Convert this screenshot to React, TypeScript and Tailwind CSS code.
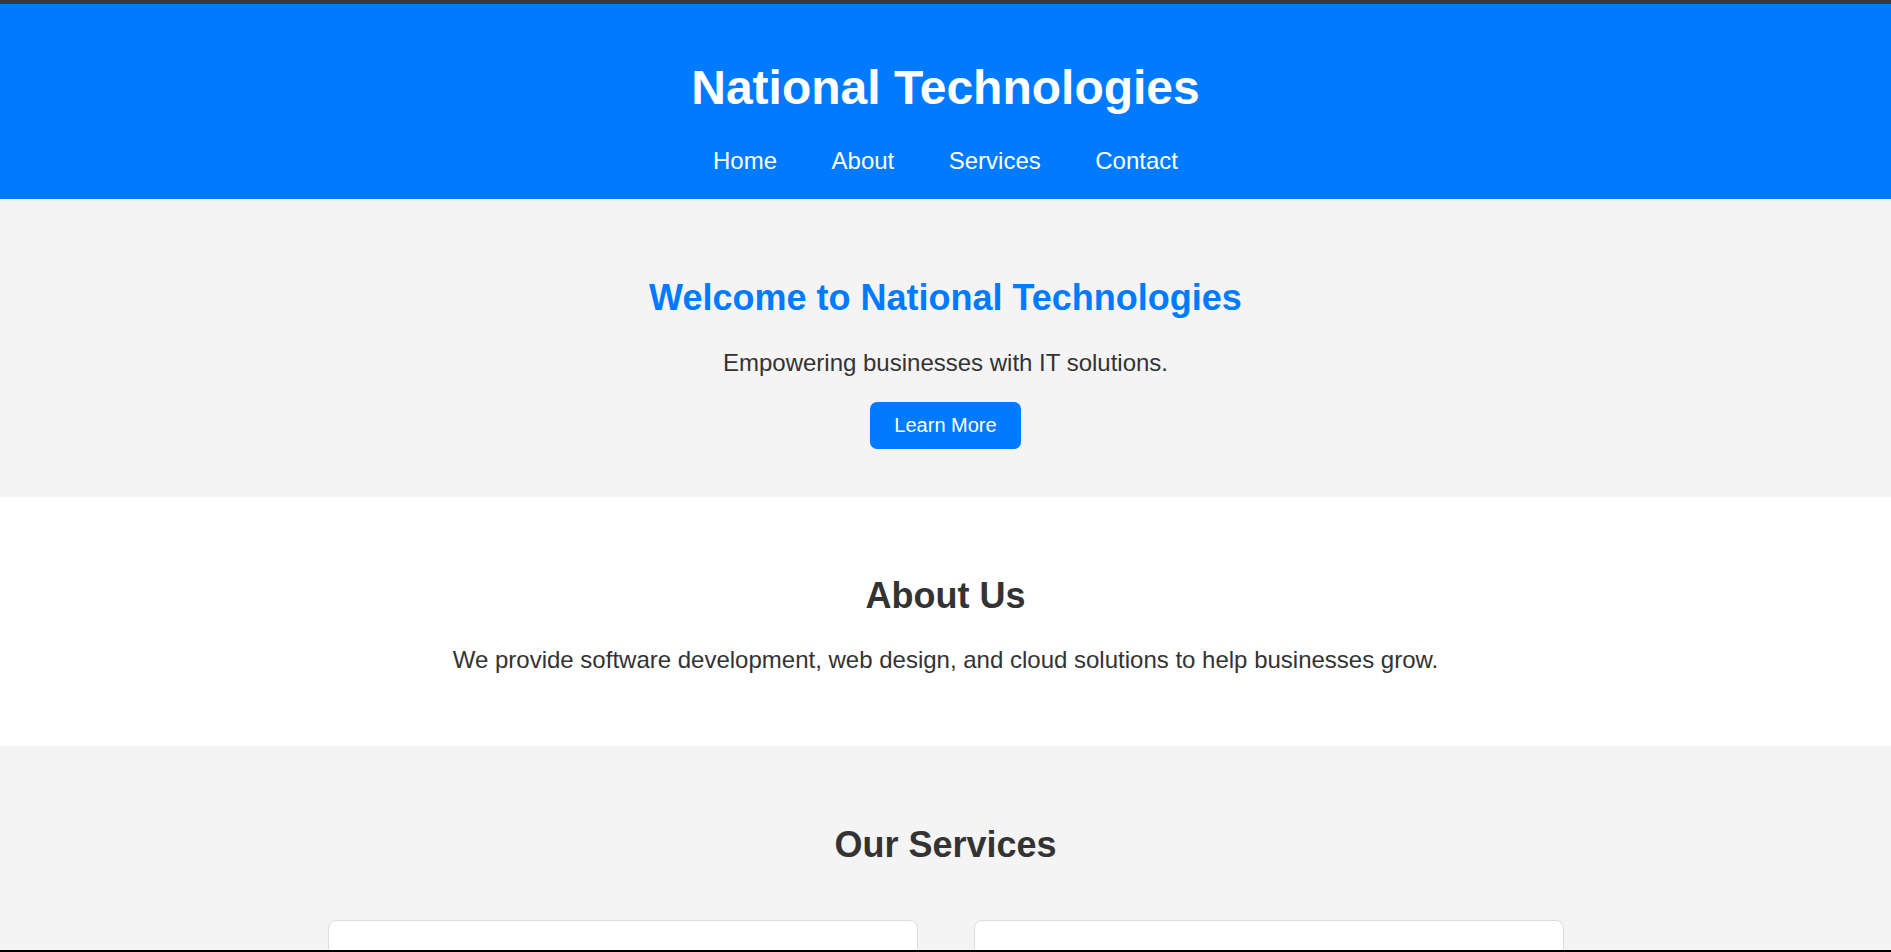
export default function App() {
  const links = ['Home', 'About', 'Services', 'Contact'];

  return (
    <div className="h-[952px] overflow-hidden flex flex-col bg-[#f4f4f4] text-[#333] font-['Liberation_Sans',Arial,sans-serif] border-t-4 border-t-[#3a3a3a] border-b-2 border-b-black">
      <header className="bg-[#007bff] text-white text-center py-6">
        <h1 className="text-[48px] leading-[55px] font-bold my-8">National Technologies</h1>
        <nav className="flex justify-center gap-[54.5px] text-[24px] leading-[28px]">
          {links.map((l) => (
            <a key={l} href="#" className="text-white">{l}</a>
          ))}
        </nav>
      </header>

      <section className="bg-[#f4f4f4] text-center pt-12 pb-[48px] flex flex-col items-center">
        <h2 className="text-[36px] leading-[41px] font-bold text-[#007bff] mt-[30px] mb-[31px]">Welcome to National Technologies</h2>
        <p className="text-[24px] leading-[28px] mb-[25px]">Empowering businesses with IT solutions.</p>
        <a href="#" className="bg-[#007bff] text-white text-[20px] leading-[23px] w-[151px] py-[12px] rounded-[7px]">Learn More</a>
      </section>

      <section className="bg-white text-center py-12">
        <h2 className="text-[36px] leading-[41px] font-bold mt-[30px] mb-[30px]">About Us</h2>
        <p className="text-[24px] leading-[28px] mb-6">We provide software development, web design, and cloud solutions to help businesses grow.</p>
      </section>

      <section className="bg-[#f4f4f4] text-center pt-12 flex-1">
        <h2 className="text-[36px] leading-[41px] font-bold mt-[30px] mb-[55px]">Our Services</h2>
        <div className="grid grid-cols-2 gap-[56px] w-[1236px] mx-auto">
          <div className="bg-white border border-[#ddd] rounded-[8px] h-[300px] p-6"></div>
          <div className="bg-white border border-[#ddd] rounded-[8px] h-[300px] p-6"></div>
        </div>
      </section>
    </div>
  );
}
